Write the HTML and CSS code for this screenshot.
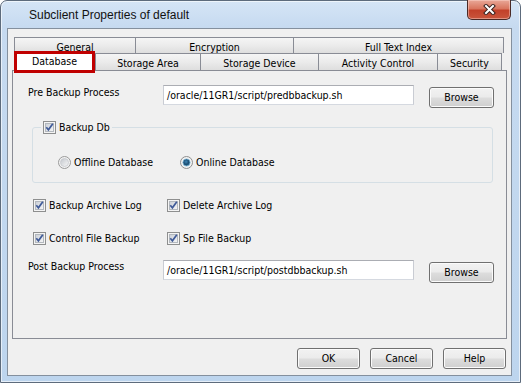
FILE: index.html
```html
<!DOCTYPE html>
<html>
<head>
<meta charset="utf-8">
<link rel="stylesheet" href="styles.css">
</head>
<body>
<div class="window">
  <div class="titlebar">
    <span class="title">Subclient Properties of default</span>
    <div class="close">
      <svg width="13" height="11" viewBox="0 0 13 11"><path d="M3 2 L10 9 M10 2 L3 9" stroke="#3a2320" stroke-width="4" stroke-linecap="square"/><path d="M3 2 L10 9 M10 2 L3 9" stroke="#fff" stroke-width="2" stroke-linecap="square"/></svg>
    </div>
  </div>
  <div class="client">
    <div class="tabs">
      <div class="tabrow back">
        <div class="tab t-general">General</div>
        <div class="tab t-encryption">Encryption</div>
        <div class="tab t-fulltext">Full Text Index</div>
      </div>
      <div class="tabrow front">
        <div class="tab t-database selected">Database</div>
        <div class="tab t-storagearea">Storage Area</div>
        <div class="tab t-storagedevice">Storage Device</div>
        <div class="tab t-activity">Activity Control</div>
        <div class="tab t-security">Security</div>
      </div>
    </div>
    <div class="panel">
      <div class="pathrow pre">
        <span class="plabel">Pre Backup Process</span>
        <div class="textbox">/oracle/11GR1/script/predbbackup.sh</div>
        <div class="btn browse">Browse</div>
      </div>
      <fieldset class="group">
        <legend class="legend">
          <span class="check"><svg width="13" height="13" viewBox="0 0 13 13"><defs><linearGradient id="cg1" x1="0" y1="0" x2="1" y2="1"><stop offset="0" stop-color="#c9ced6"/><stop offset="1" stop-color="#f7f7f7"/></linearGradient></defs><rect x="0.5" y="0.5" width="12" height="12" fill="#f4f4f4" stroke="#8e8f8f"/><rect x="2.5" y="2.5" width="8" height="8" fill="url(#cg1)" stroke="#b3b8be"/><path d="M3.3 6.3 L5.4 8.8 L9.8 2.8" fill="none" stroke="#3f5a98" stroke-width="1.7"/></svg></span>
          <span>Backup Db</span>
        </legend>
        <div class="radios">
          <span class="radio r-offline"><svg width="13" height="13" viewBox="0 0 13 13"><defs><linearGradient id="rg1" x1="0" y1="0" x2="1" y2="1"><stop offset="0" stop-color="#c2c6cc"/><stop offset="1" stop-color="#f8f8f8"/></linearGradient></defs><circle cx="6.5" cy="6.5" r="6" fill="#f2f2f2" stroke="#9a9a9a"/><circle cx="6.5" cy="6.5" r="4" fill="url(#rg1)" stroke="#c6c9ce" stroke-width="0.8"/></svg><span>Offline Database</span></span>
          <span class="radio"><svg width="13" height="13" viewBox="0 0 13 13"><defs><radialGradient id="rg2" cx="0.45" cy="0.4" r="0.6"><stop offset="0" stop-color="#3d86b4"/><stop offset="0.6" stop-color="#1b4d72"/><stop offset="1" stop-color="#2a6d94"/></radialGradient></defs><circle cx="6.5" cy="6.5" r="6" fill="#f2f2f2" stroke="#8f8f8f"/><circle cx="6.5" cy="6.5" r="3.6" fill="url(#rg2)" stroke="#7fb6d6" stroke-width="0.8"/></svg><span>Online Database</span></span>
        </div>
      </fieldset>
      <div class="checkrow row1">
        <span class="cbitem first"><span class="check"><svg width="13" height="13" viewBox="0 0 13 13"><rect x="0.5" y="0.5" width="12" height="12" fill="#f4f4f4" stroke="#8e8f8f"/><rect x="2.5" y="2.5" width="8" height="8" fill="url(#cg1)" stroke="#b3b8be"/><path d="M3.3 6.3 L5.4 8.8 L9.8 2.8" fill="none" stroke="#3f5a98" stroke-width="1.7"/></svg></span><span>Backup Archive Log</span></span>
        <span class="cbitem"><span class="check"><svg width="13" height="13" viewBox="0 0 13 13"><rect x="0.5" y="0.5" width="12" height="12" fill="#f4f4f4" stroke="#8e8f8f"/><rect x="2.5" y="2.5" width="8" height="8" fill="url(#cg1)" stroke="#b3b8be"/><path d="M3.3 6.3 L5.4 8.8 L9.8 2.8" fill="none" stroke="#3f5a98" stroke-width="1.7"/></svg></span><span>Delete Archive Log</span></span>
      </div>
      <div class="checkrow row2">
        <span class="cbitem first"><span class="check"><svg width="13" height="13" viewBox="0 0 13 13"><rect x="0.5" y="0.5" width="12" height="12" fill="#f4f4f4" stroke="#8e8f8f"/><rect x="2.5" y="2.5" width="8" height="8" fill="url(#cg1)" stroke="#b3b8be"/><path d="M3.3 6.3 L5.4 8.8 L9.8 2.8" fill="none" stroke="#3f5a98" stroke-width="1.7"/></svg></span><span>Control File Backup</span></span>
        <span class="cbitem"><span class="check"><svg width="13" height="13" viewBox="0 0 13 13"><rect x="0.5" y="0.5" width="12" height="12" fill="#f4f4f4" stroke="#8e8f8f"/><rect x="2.5" y="2.5" width="8" height="8" fill="url(#cg1)" stroke="#b3b8be"/><path d="M3.3 6.3 L5.4 8.8 L9.8 2.8" fill="none" stroke="#3f5a98" stroke-width="1.7"/></svg></span><span>Sp File Backup</span></span>
      </div>
      <div class="pathrow post">
        <span class="plabel">Post Backup Process</span>
        <div class="textbox">/oracle/11GR1/script/postdbbackup.sh</div>
        <div class="btn browse">Browse</div>
      </div>
    </div>
    <div class="footer">
      <div class="btn fbtn">OK</div>
      <div class="btn fbtn">Cancel</div>
      <div class="btn fbtn">Help</div>
    </div>
  </div>
</div>
</body>
</html>
```
FILE: styles.css
```css
* { box-sizing: border-box; }
html, body { margin: 0; padding: 0; }
body {
  width: 521px;
  height: 383px;
  overflow: hidden;
  background: #ffffff;
  font-family: "DejaVu Sans Condensed", "DejaVu Sans", sans-serif;
  font-stretch: condensed;
  font-size: 10.5px;
  line-height: 13px;
  color: #000;
}
.window {
  width: 521px;
  height: 383px;
  border: 1px solid #5d6b7c;
  border-radius: 7px 7px 0 0;
  background: linear-gradient(to bottom, #d5e5f6 0, #c6daf0 26px, #bdd5ee 100%);
  box-shadow: inset 0 0 0 1px rgba(255,255,255,0.6);
  display: flex;
  flex-direction: column;
}
.titlebar {
  height: 27px;
  flex: none;
  display: flex;
  align-items: flex-start;
}
.title {
  font-family: "Liberation Sans", sans-serif;
  font-stretch: normal;
  font-size: 12px;
  line-height: 14px;
  margin: 7px 0 0 28px;
  color: #111;
}
.close {
  margin: -1px 9px 0 auto;
  width: 44px;
  height: 20px;
  border: 1px solid #4a2a26;
  border-top: none;
  border-radius: 0 0 5px 5px;
  background: linear-gradient(to bottom, #e9a898 0, #d9765f 45%, #c2412a 55%, #c9553c 100%);
  box-shadow: inset 0 0 0 1px rgba(255,220,210,0.45);
  display: flex;
  align-items: center;
  justify-content: center;
}
.close svg { display: block; }
.client {
  flex: 1;
  margin: 0 8px 6px 6px;
  border: 1px solid #84909e;
  background: #f0f0f0;
  display: flex;
  flex-direction: column;
}
.tabs {
  margin-top: 8px;
  padding-left: 6px;
  height: 33px;
  flex: none;
}
.tabrow { display: flex; }
.tab {
  border: 1px solid #898c95;
  border-bottom: none;
  background: linear-gradient(to bottom, #f5f5f5 0, #ebebeb 50%, #dedede 100%);
  text-align: center;
  margin-left: -1px;
}
.tabrow .tab:first-child { margin-left: 0; }
.back .tab { height: 16px; padding-top: 3px; }
.front .tab { height: 17px; padding-top: 3px; }
.t-general { width: 122px; }
.t-encryption { width: 159px; }
.t-fulltext { width: 211px; }
.t-database { width: 81px; }
.t-storagearea { width: 106px; }
.t-storagedevice { width: 119px; }
.t-activity { width: 120px; }
.t-security { width: 65px; }
.front .tab.selected {
  position: relative;
  z-index: 1;
  height: 22px;
  margin-top: -2px;
  margin-bottom: -3px;
  margin-right: 1px;
  border: 3px solid #c00000;
  background: #ffffff;
  padding-top: 1px;
}
.panel {
  margin-left: 4px;
  width: 495px;
  height: 269px;
  border: 1px solid #898c95;
  background: #f0f0f0;
  flex: none;
}
.pathrow {
  display: flex;
  align-items: flex-start;
  padding-left: 15px;
}
.pre { margin-top: 14px; }
.pre .plabel { margin-top: 1px; }
.post { margin-top: 15px; }
.post .plabel { margin-top: 0; }
.plabel { width: 135px; }
.textbox {
  width: 251px;
  height: 20px;
  background: #fff;
  border: 1px solid #abadb3;
  border-left-color: #c9ccd3;
  border-right-color: #c9ccd3;
  border-bottom-color: #d5d9e0;
  padding: 3px 0 0 3px;
  white-space: nowrap;
}
.btn {
  height: 21px;
  border: 1px solid #707070;
  border-radius: 3px;
  background: linear-gradient(to bottom, #f2f2f2 0, #ebebeb 48%, #dddddd 52%, #cfcfcf 100%);
  box-shadow: inset 0 0 0 1px #fbfbfb;
  text-align: center;
  padding-top: 3px;
}
.browse { width: 65px; margin: 2px 0 0 15px; }
.group {
  margin: 13px 0 0 19px;
  width: 461px;
  padding: 0 0 13px 0;
  border: 1px solid #d5dfe5;
  border-radius: 3px;
  min-inline-size: 0;
}
.legend {
  margin-left: 8px;
  padding: 0 2px;
  height: 13px;
  display: flex;
  align-items: center;
}
.check { display: inline-flex; width: 13px; height: 13px; margin-right: 3px; }
.check svg, .radio svg { display: block; }
.radios {
  display: flex;
  align-items: center;
  margin: 22px 0 0 25px;
  height: 13px;
}
.radio { display: flex; align-items: center; }
.radio svg { margin-right: 3px; flex: none; }
.r-offline { width: 122px; }
.checkrow {
  display: flex;
  align-items: center;
  height: 13px;
  margin-left: 20px;
}
.row1 { margin-top: 16px; }
.row2 { margin-top: 20px; }
.cbitem { display: flex; align-items: center; }
.cbitem.first { width: 134px; }
.footer {
  display: flex;
  justify-content: flex-end;
  gap: 10px;
  margin-top: 9px;
  padding-right: 5px;
}
.fbtn { width: 63px; }
```
